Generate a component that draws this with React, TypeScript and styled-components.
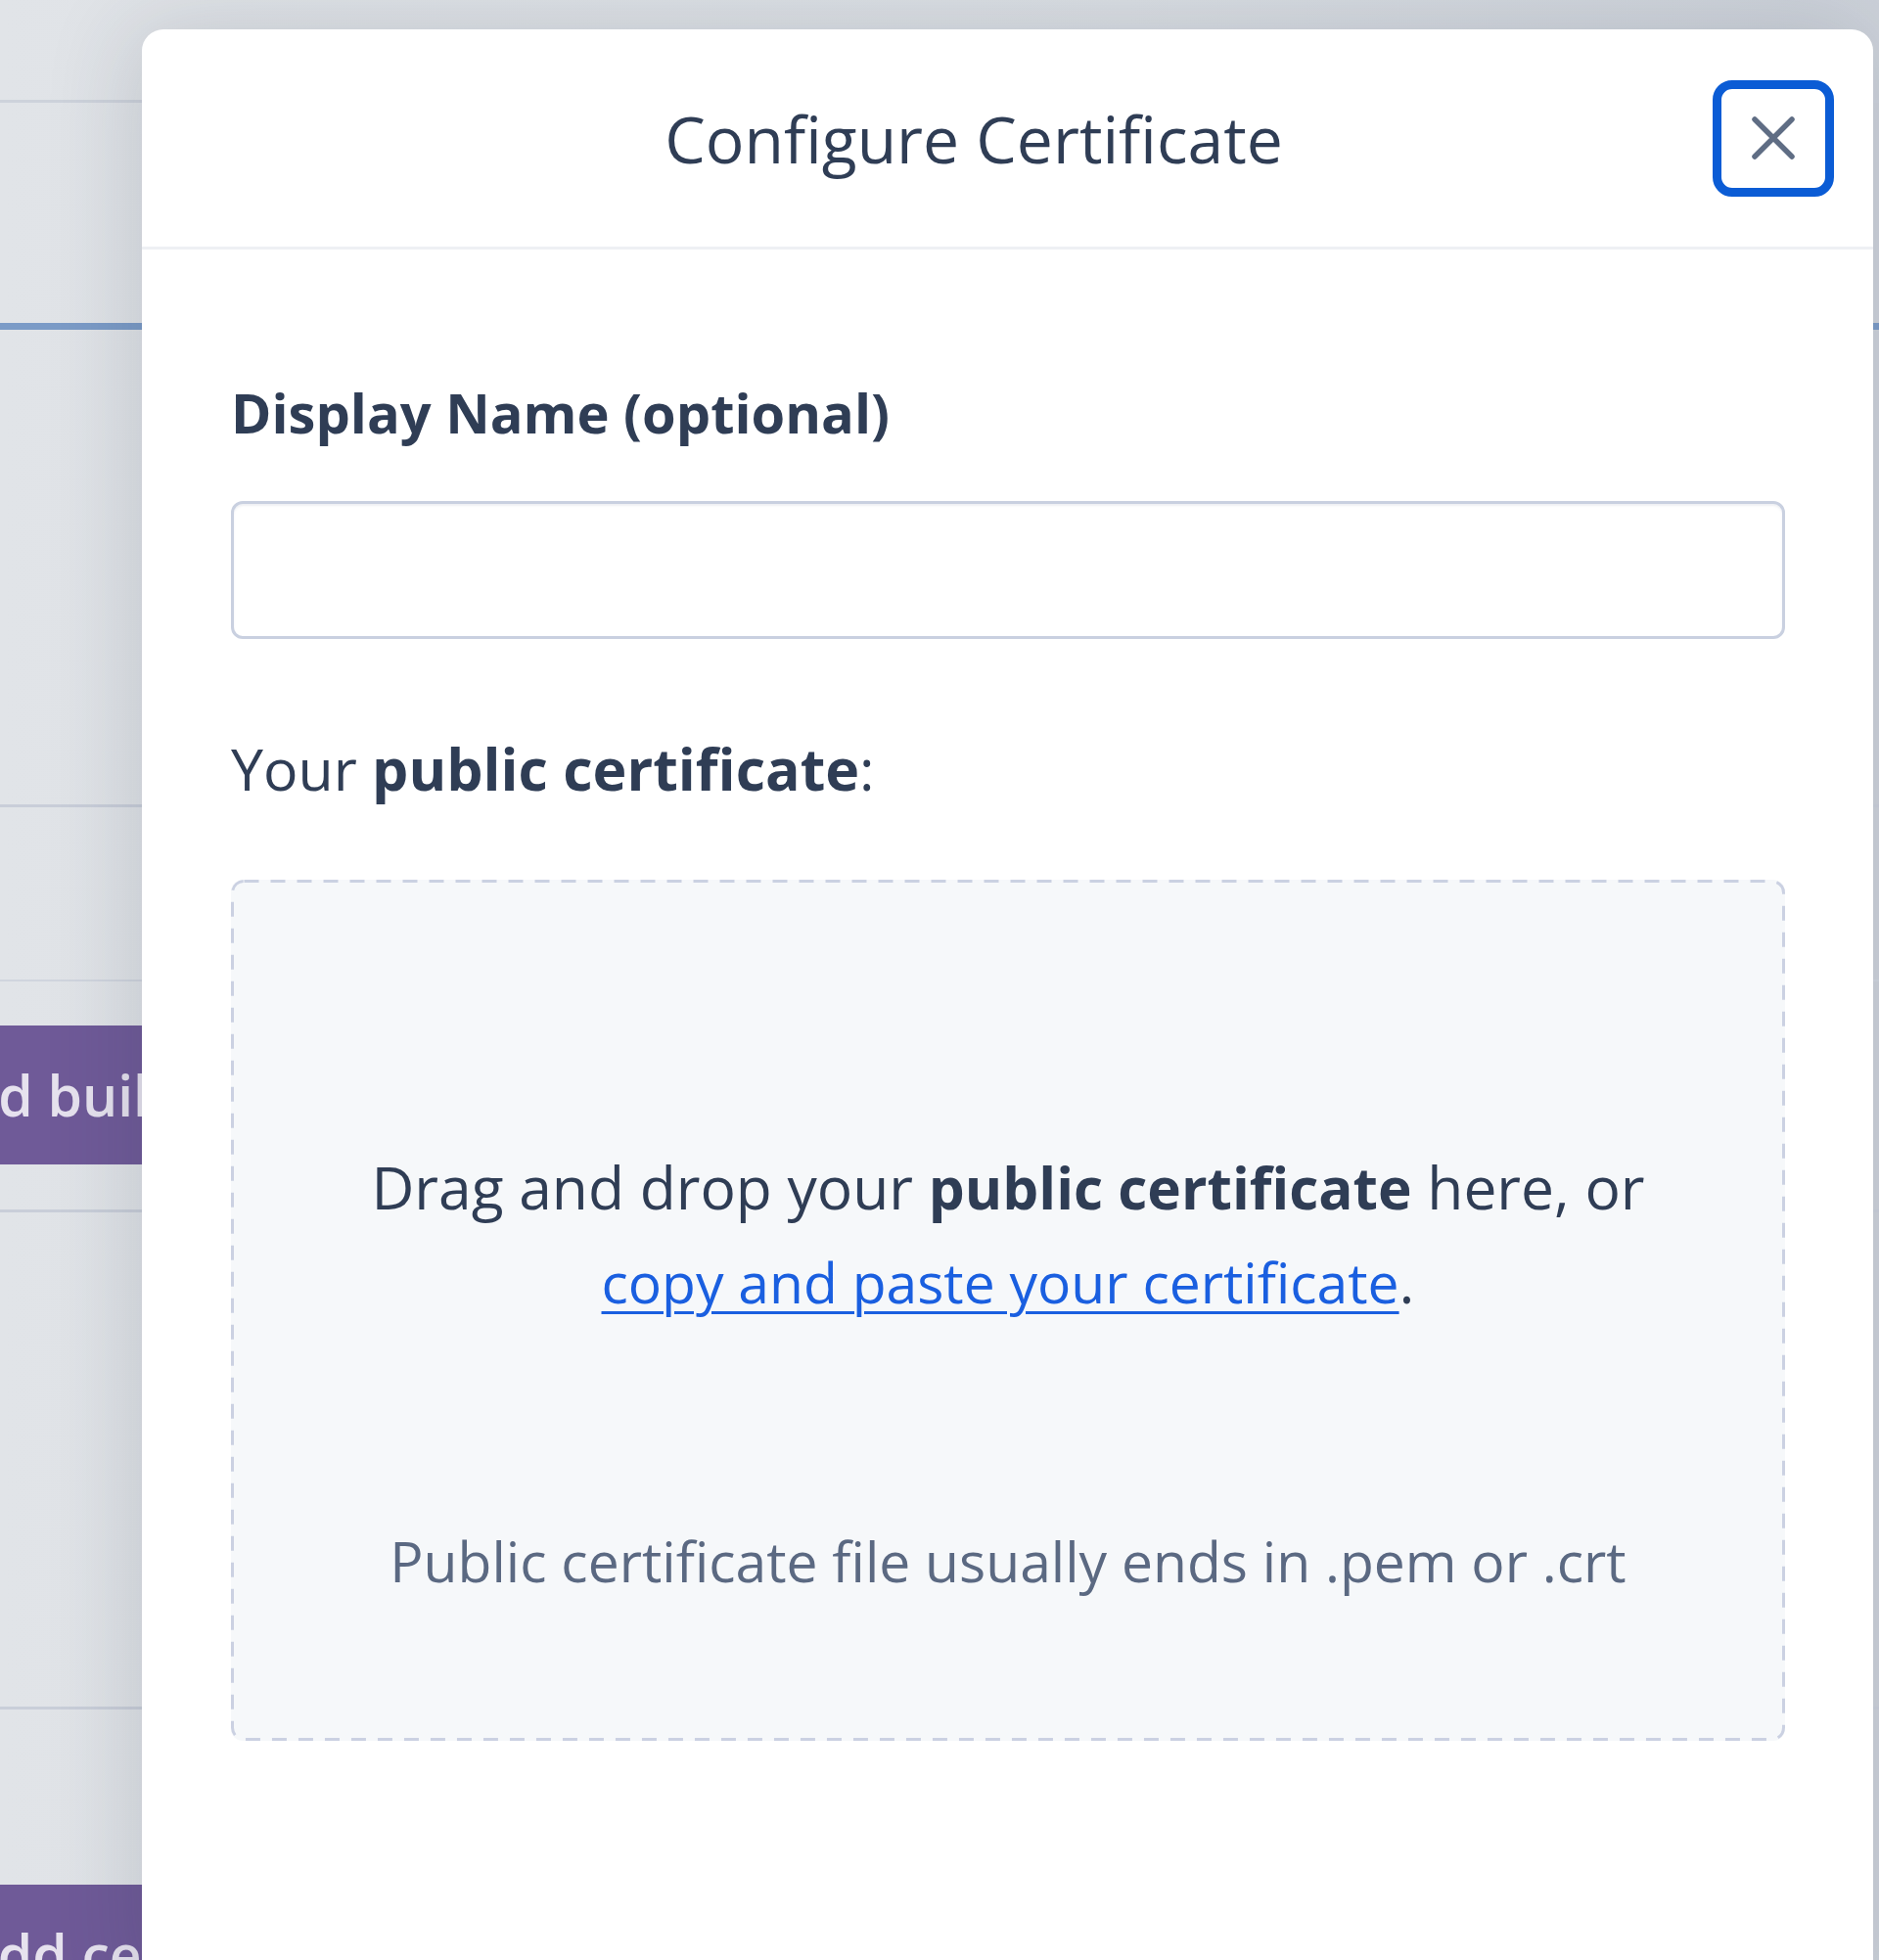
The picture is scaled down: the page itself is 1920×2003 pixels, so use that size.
import styled, { createGlobalStyle } from "styled-components"

const GlobalStyle = createGlobalStyle`
    html, body {
        margin: 0;
        padding: 0;
    }
    body {
        font-family: "Open Sans", "Liberation Sans", sans-serif;
        background: #dde1e6;
        overflow: hidden;
    }
`

const Page = styled.div`
    position: relative;
    width: 1920px;
    height: 2003px;
    overflow: hidden;
    background: linear-gradient(90deg, #e1e4e8 0%, #dadee3 60%, #ccd1d9 100%);
`

// the dashboard that sits under the modal overlay
const Backdrop = styled.div`
    display: flex;
    flex-direction: column;
`

const Band = styled.div<{ $h: number }>`
    height: ${p => p.$h}px;
`

const Rule = styled.div<{ $size?: number; $color?: string }>`
    height: ${p => p.$size ?? 3}px;
    background: ${p => p.$color ?? "#c9ced9"};
`

const PurpleButton = styled.div<{ $shift: number }>`
    height: 142px;
    width: 560px;
    margin-left: ${p => p.$shift}px;
    box-sizing: border-box;
    padding-left: 40px;
    display: flex;
    align-items: center;
    background: #6f5a98;
    color: #e6e2ee;
    font-weight: 600;
    font-size: 57px;
    white-space: nowrap;
`

const Modal = styled.div`
    position: absolute;
    left: 145px;
    top: 30px;
    width: 1769px;
    bottom: -40px;
    background: #ffffff;
    border-radius: 22px 22px 0 0;
    box-shadow: -10px 0 90px rgba(40, 50, 70, 0.16);
    display: flex;
    flex-direction: column;
`

const Header = styled.div`
    height: 222px;
    display: grid;
    grid-template-columns: 1fr auto;
    align-items: center;
    padding: 0 40px 0 95px;
    border-bottom: 3px solid #eef0f4;
`

const Title = styled.h1`
    margin: 0;
    text-align: center;
    font-weight: 400;
    font-size: 66px;
    color: #2f3d55;
`

const CloseButton = styled.button`
    width: 124px;
    height: 119px;
    box-sizing: border-box;
    border: 9px solid #0b5cd5;
    border-radius: 20px;
    background: #ffffff;
    display: flex;
    align-items: center;
    justify-content: center;
    padding: 0;
    cursor: pointer;
`

const Body = styled.div`
    padding: 123px 90px 0 91px;
    display: flex;
    flex-direction: column;
`

const Label = styled.label`
    font-weight: 700;
    font-size: 56px;
    line-height: 87px;
    color: #2f3d55;
    margin-bottom: 47px;
`

const Input = styled.input`
    width: 100%;
    height: 141px;
    box-sizing: border-box;
    border: 3px solid #c9d0e0;
    border-radius: 12px;
    background: #ffffff;
    box-shadow: inset 0 2px 2px rgba(120, 135, 165, 0.12);
    outline: none;
    font-family: inherit;
    font-size: 56px;
    padding: 0 30px;
`

const Prompt = styled.div`
    margin-top: 89px;
    font-size: 59px;
    line-height: 87px;
    color: #2f3d55;

    b {
        font-weight: 700;
    }
`

const DropZone = styled.div`
    position: relative;
    margin-top: 70px;
    height: 880px;
    box-sizing: border-box;
    border-radius: 12px;
    background: #f6f8fa;
    padding-top: 266px;
    display: flex;
    flex-direction: column;
    align-items: center;
`

const DashedEdge = styled.svg`
    position: absolute;
    inset: 0;
    pointer-events: none;
`

const DropText = styled.p`
    margin: 0;
    text-align: center;
    font-size: 60.5px;
    line-height: 95px;
    color: #2f3d55;

    b {
        font-weight: 700;
        font-size: 58.5px;
    }
`

const PasteLink = styled.a`
    font-size: 57px;
    color: #1a5fe0;
    text-decoration: underline;
    text-decoration-thickness: 3px;
    text-underline-offset: 8px;
    cursor: pointer;
`

const Hint = styled.p`
    margin: 196px 0 0;
    font-size: 57px;
    line-height: 82px;
    color: #5b6982;
`

function CloseIcon() {
    return (
        <svg width="46" height="44" viewBox="0 0 46 44">
            <path d="M4 3 L42 41 M42 3 L4 41" stroke="#5f6d84" strokeWidth="5.5" strokeLinecap="round" fill="none" />
        </svg>
    )
}

export default function App() {
    return (
        <>
            <GlobalStyle />
            <Page>
                <Backdrop>
                    <Band $h={102} />
                    <Rule $color="#cdd2db" />
                    <Band $h={225} />
                    <Rule $size={7} $color="#7b9bc7" />
                    <Band $h={485} />
                    <Rule />
                    <Band $h={176} />
                    <Rule $size={2} $color="#d0d5de" />
                    <Band $h={45} />
                    <PurpleButton $shift={-115}>Add buildpack</PurpleButton>
                    <Band $h={46} />
                    <Rule />
                    <Band $h={505} />
                    <Rule />
                    <Band $h={179} />
                    <PurpleButton $shift={-80}>Add certificate</PurpleButton>
                </Backdrop>

                <Modal>
                    <Header>
                        <Title>Configure Certificate</Title>
                        <CloseButton aria-label="Close">
                            <CloseIcon />
                        </CloseButton>
                    </Header>
                    <Body>
                        <Label>Display Name (optional)</Label>
                        <Input />
                        <Prompt>
                            Your <b>public certificate</b>:
                        </Prompt>
                        <DropZone>
                            <DashedEdge width="1588" height="880" viewBox="0 0 1588 880">
                                <rect
                                    x="1.5"
                                    y="1.5"
                                    width="1585"
                                    height="877"
                                    rx="12"
                                    fill="none"
                                    stroke="#cbd1e2"
                                    strokeWidth="3"
                                    strokeDasharray="15 12"
                                />
                            </DashedEdge>
                            <DropText>
                                Drag and drop your <b>public certificate</b> here, or
                                <br />
                                <PasteLink>copy and paste your certificate</PasteLink>.
                            </DropText>
                            <Hint>Public certificate file usually ends in .pem or .crt</Hint>
                        </DropZone>
                    </Body>
                </Modal>
            </Page>
        </>
    )
}
